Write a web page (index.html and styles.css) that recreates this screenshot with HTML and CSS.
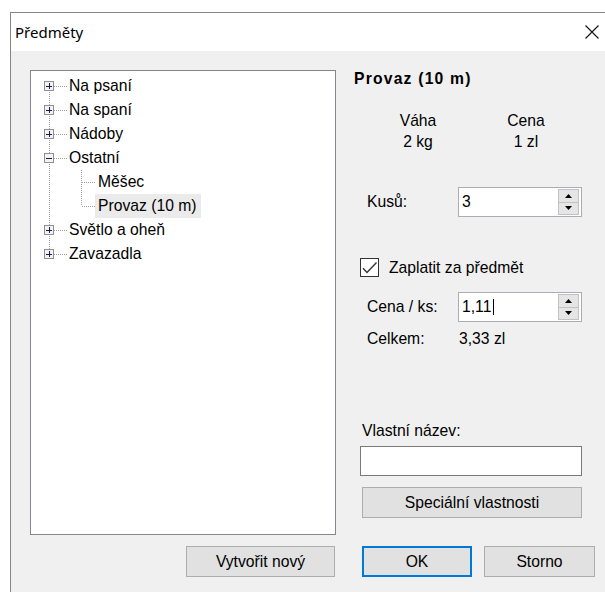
FILE: index.html
```html
<!DOCTYPE html>
<html lang="cs">
<head>
<meta charset="utf-8">
<title>Předměty</title>
<link rel="stylesheet" href="styles.css">
</head>
<body>
<div class="window">
  <div class="titlebar">
    <span class="title">Předměty</span>
    <svg class="close" width="14" height="14" viewBox="0 0 14 14" aria-hidden="true">
      <path d="M0.5 0.5 L13.5 13.5 M13.5 0.5 L0.5 13.5" stroke="#111" stroke-width="1.1" fill="none"/>
    </svg>
  </div>

  <div class="client">
    <div class="left-pane">
      <div class="tree">
        <div class="node">
          <svg class="gutter" width="38" height="24" viewBox="0 0 38 24">
            <path class="dots" d="M18.5 12 V24 M23 12.5 H36"/>
            <rect class="exp" x="13.5" y="7.5" width="9" height="9"/>
            <path class="sign" d="M15 12.5 H21 M18.5 9 V15"/>
          </svg>
          <span class="label">Na psaní</span>
        </div>
        <div class="node">
          <svg class="gutter" width="38" height="24" viewBox="0 0 38 24">
            <path class="dots" d="M18.5 0 V24 M23 12.5 H36"/>
            <rect class="exp" x="13.5" y="7.5" width="9" height="9"/>
            <path class="sign" d="M15 12.5 H21 M18.5 9 V15"/>
          </svg>
          <span class="label">Na spaní</span>
        </div>
        <div class="node">
          <svg class="gutter" width="38" height="24" viewBox="0 0 38 24">
            <path class="dots" d="M18.5 0 V24 M23 12.5 H36"/>
            <rect class="exp" x="13.5" y="7.5" width="9" height="9"/>
            <path class="sign" d="M15 12.5 H21 M18.5 9 V15"/>
          </svg>
          <span class="label">Nádoby</span>
        </div>
        <div class="node">
          <svg class="gutter" width="38" height="24" viewBox="0 0 38 24">
            <path class="dots" d="M18.5 0 V24 M23 12.5 H36"/>
            <rect class="exp" x="13.5" y="7.5" width="9" height="9"/>
            <path class="sign" d="M15 12.5 H21"/>
          </svg>
          <span class="label">Ostatní</span>
        </div>
        <div class="node">
          <svg class="gutter" width="67" height="24" viewBox="0 0 67 24">
            <path class="dots" d="M18.5 0 V24 M50.5 0 V24 M51 12.5 H65"/>
          </svg>
          <span class="label">Měšec</span>
        </div>
        <div class="node">
          <svg class="gutter" width="67" height="24" viewBox="0 0 67 24">
            <path class="dots" d="M18.5 0 V24 M50.5 0 V12 M51 12.5 H65"/>
          </svg>
          <span class="label selected">Provaz (10 m)</span>
        </div>
        <div class="node">
          <svg class="gutter" width="38" height="24" viewBox="0 0 38 24">
            <path class="dots" d="M18.5 0 V24 M23 12.5 H36"/>
            <rect class="exp" x="13.5" y="7.5" width="9" height="9"/>
            <path class="sign" d="M15 12.5 H21 M18.5 9 V15"/>
          </svg>
          <span class="label">Světlo a oheň</span>
        </div>
        <div class="node">
          <svg class="gutter" width="38" height="24" viewBox="0 0 38 24">
            <path class="dots" d="M18.5 0 V12 M23 12.5 H36"/>
            <rect class="exp" x="13.5" y="7.5" width="9" height="9"/>
            <path class="sign" d="M15 12.5 H21 M18.5 9 V15"/>
          </svg>
          <span class="label">Zavazadla</span>
        </div>
      </div>
      <div class="left-actions">
        <button class="btn btn-create" type="button">Vytvořit nový</button>
      </div>
    </div>

    <div class="right-pane">
      <div class="item-title">Provaz (10 m)</div>

      <div class="stats">
        <span>Váha</span><span>Cena</span>
        <span>2 kg</span><span>1 zl</span>
      </div>

      <div class="field-row row-count">
        <span class="field-label">Kusů:</span>
        <div class="spin">
          <span class="spin-value">3</span>
          <div class="spin-buttons">
            <span class="spin-btn"><svg width="7" height="4" viewBox="0 0 7 4"><path d="M0 4 L3.5 0 L7 4 Z" fill="#000"/></svg></span>
            <span class="spin-btn"><svg width="7" height="4" viewBox="0 0 7 4"><path d="M0 0 L7 0 L3.5 4 Z" fill="#000"/></svg></span>
          </div>
        </div>
      </div>

      <div class="check-row">
        <span class="check">
          <svg width="17" height="17" viewBox="0 0 17 17"><path d="M2 9.3 L6 13.5 L15.5 3.5" stroke="#333" stroke-width="1.4" fill="none"/></svg>
        </span>
        <span>Zaplatit za předmět</span>
      </div>

      <div class="field-row row-price">
        <span class="field-label">Cena / ks:</span>
        <div class="spin">
          <span class="spin-value">1,11<span class="caret"></span></span>
          <div class="spin-buttons">
            <span class="spin-btn"><svg width="7" height="4" viewBox="0 0 7 4"><path d="M0 4 L3.5 0 L7 4 Z" fill="#000"/></svg></span>
            <span class="spin-btn"><svg width="7" height="4" viewBox="0 0 7 4"><path d="M0 0 L7 0 L3.5 4 Z" fill="#000"/></svg></span>
          </div>
        </div>
      </div>

      <div class="total-row">
        <span class="field-label">Celkem:</span>
        <span>3,33 zl</span>
      </div>

      <div class="name-label">Vlastní název:</div>
      <div class="textbox"></div>

      <button class="btn btn-special" type="button">Speciální vlastnosti</button>

      <div class="dialog-actions">
        <button class="btn btn-default" type="button">OK</button>
        <button class="btn btn-cancel" type="button">Storno</button>
      </div>
    </div>
  </div>
</div>
</body>
</html>
```

FILE: styles.css
```css
* {
  box-sizing: border-box;
}

html,
body {
  margin: 0;
  padding: 0;
  width: 605px;
  height: 592px;
  overflow: hidden;
  background: #ffffff;
}

body {
  font-family: "Liberation Sans", Arial, sans-serif;
  font-size: 15.7px;
  color: #000;
}

/* ---- window frame ---- */
.window {
  margin: 12px 0 0 10px;
  width: 625px;
  height: 600px;
  border-top: 1px solid #858585;
  border-left: 1px solid #858585;
  background: #f0f0f0;
  display: flex;
  flex-direction: column;
}

.titlebar {
  height: 38px;
  flex: none;
  background: #ffffff;
  display: flex;
  align-items: center;
  padding-left: 4px;
}

.title {
  font-family: "Noto Sans", "Open Sans", sans-serif;
  font-size: 15px;
  color: #000;
}

.close {
  margin-left: auto;
  margin-right: 36px;
  display: block;
}

.client {
  display: flex;
  padding: 19px 0 0 19px;
}

/* ---- left: tree ---- */
.left-pane {
  width: 306px;
  display: flex;
  flex-direction: column;
}

.tree {
  height: 465px;
  background: #ffffff;
  border: 1px solid #828790;
  padding-top: 3px;
}

.node {
  height: 24px;
  display: flex;
  align-items: center;
}

.gutter {
  display: block;
  flex: none;
}

.dots {
  stroke: #a0a0a0;
  stroke-width: 1;
  stroke-dasharray: 1 1;
  fill: none;
  shape-rendering: crispEdges;
}

.exp {
  fill: #f3f3f3;
  stroke: #8e8f8f;
  stroke-width: 1;
  shape-rendering: crispEdges;
}

.sign {
  stroke: #1a1a4a;
  stroke-width: 1;
  fill: none;
  shape-rendering: crispEdges;
}

.label {
  height: 24px;
  line-height: 24px;
  margin-left: -3px;
  padding: 0 4px 0 3px;
  white-space: nowrap;
}

.label.selected {
  background: #ebebeb;
}

.left-actions {
  display: flex;
  justify-content: flex-end;
  margin-top: 11px;
  padding-right: 1px;
}

/* ---- buttons ---- */
.btn {
  font: inherit;
  color: #000;
  background: #e1e1e1;
  border: 1px solid #adadad;
  height: 31px;
  padding: 0;
  margin: 0;
  display: flex;
  align-items: center;
  justify-content: center;
}

.btn-create {
  width: 149px;
}

.btn-default {
  border: 2px solid #0078d7;
}

/* ---- right: detail ---- */
.right-pane {
  margin-left: 18px;
  width: 245px;
  display: flex;
  flex-direction: column;
  line-height: 18px;
}

.item-title {
  font-weight: bold;
  letter-spacing: 1.2px;
  height: 18px;
}

.stats {
  display: grid;
  grid-template-columns: 80px 80px;
  column-gap: 28px;
  row-gap: 3px;
  margin: 24px 0 0 24px;
  text-align: center;
}

.field-row {
  display: flex;
  align-items: center;
  height: 30px;
  padding-left: 13px;
}

.row-count {
  margin-top: 36px;
}

.row-price {
  margin-top: 15px;
}

.field-label {
  width: 91px;
  flex: none;
}

.spin {
  width: 124px;
  height: 30px;
  background: #ffffff;
  border: 1px solid #abadb3;
  padding: 1px 2px 1px 0;
  display: flex;
}

.spin-value {
  flex: 1;
  display: flex;
  align-items: center;
  padding-left: 3px;
}

.caret {
  display: inline-block;
  width: 1px;
  height: 16px;
  margin-left: 2px;
  background: #000;
}

.spin-buttons {
  width: 21px;
  display: flex;
  flex-direction: column;
}

.spin-btn {
  flex: 1;
  background: #e5e5e5;
  border: 1px solid #c2c2c2;
  display: flex;
  align-items: center;
  justify-content: center;
}

.spin-btn + .spin-btn {
  border-top: none;
}

.spin-btn svg {
  display: block;
}

.check-row {
  display: flex;
  align-items: center;
  gap: 10px;
  height: 19px;
  margin: 41px 0 0 6px;
}

.check {
  width: 19px;
  height: 19px;
  flex: none;
  background: #ffffff;
  border: 1px solid #333;
  display: flex;
}

.total-row {
  display: flex;
  height: 18px;
  margin-top: 8px;
  padding-left: 13px;
}

.total-row .field-label {
  width: 92px;
}

.name-label {
  margin: 74px 0 0 8px;
  height: 18px;
}

.textbox {
  width: 222px;
  height: 30px;
  margin: 6px 0 0 6px;
  background: #ffffff;
  border: 1px solid #7a7a7a;
}

.btn-special {
  width: 220px;
  margin: 11px 0 0 8px;
}

.dialog-actions {
  display: flex;
  gap: 12px;
  margin: 28px 0 0 8px;
}

.btn-default {
  width: 110px;
}

.btn-cancel {
  width: 111px;
}
```
